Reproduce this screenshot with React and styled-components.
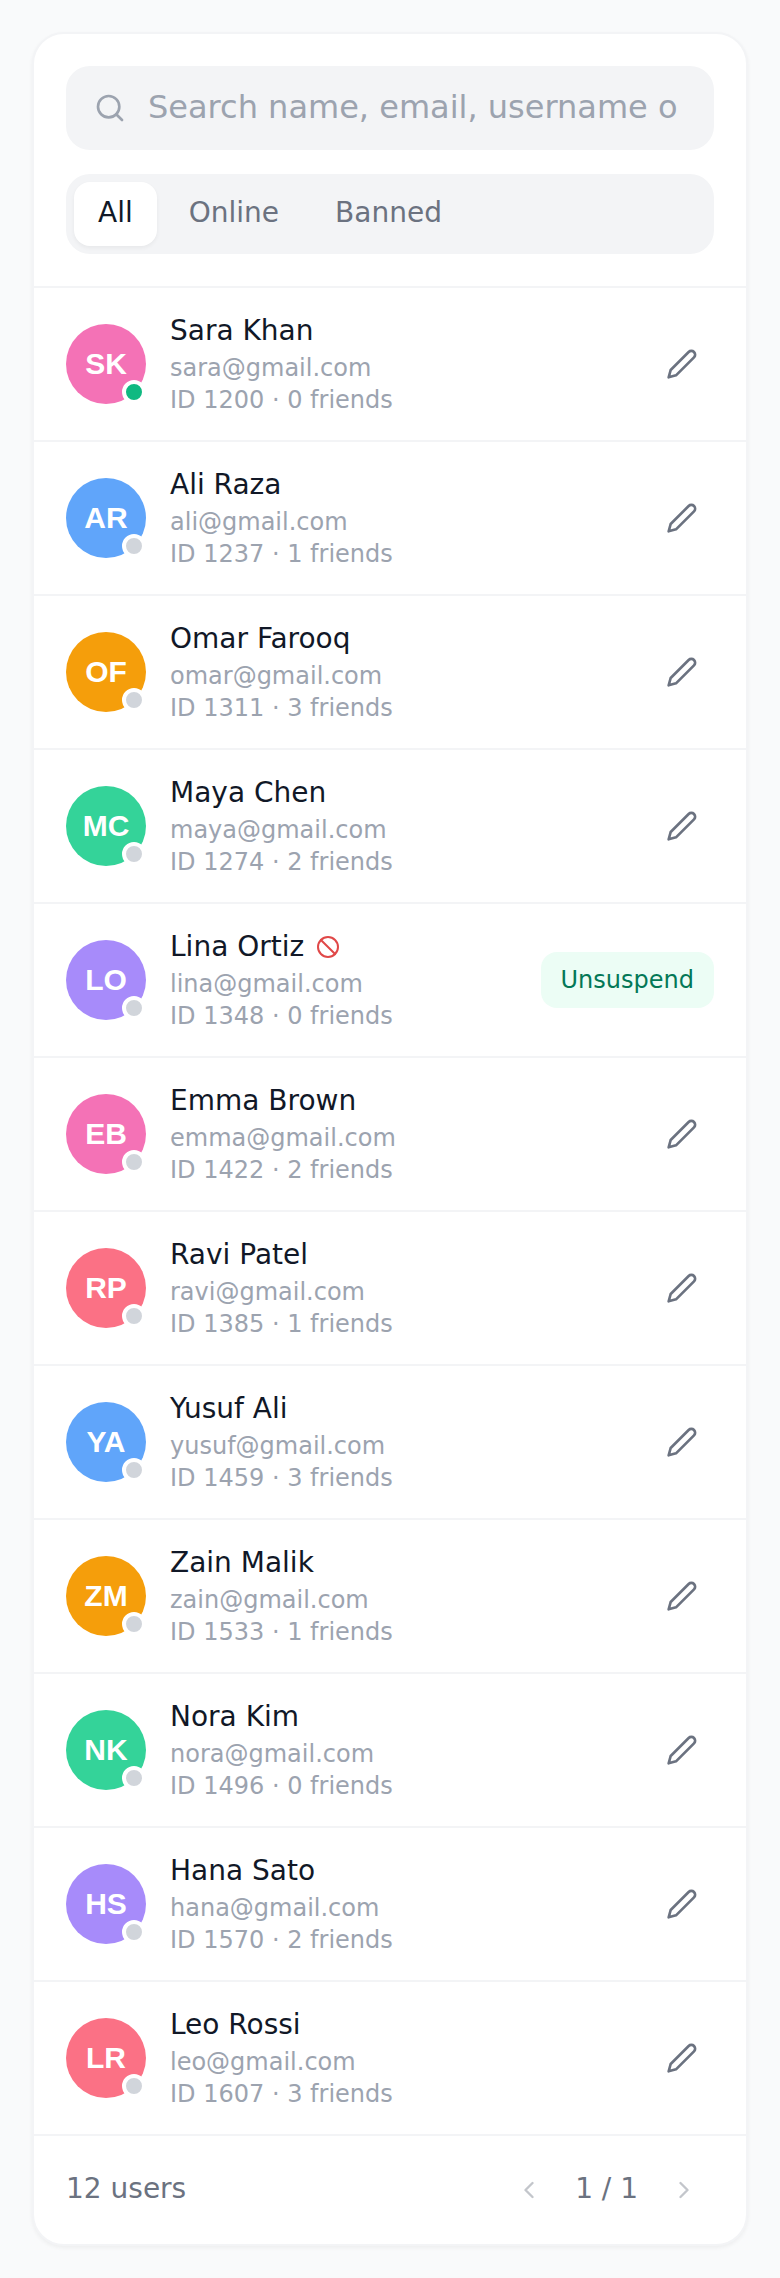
import { useState } from "react";
import styled, { createGlobalStyle } from "styled-components";
import { Search, Ban, ChevronLeft, ChevronRight } from "lucide-react";
import { FiEdit2 } from "react-icons/fi";

const users = [
  { id: 1200, name: "Sara Khan", email: "sara@gmail.com", friends: 0, color: "#f472b6", online: true },
  { id: 1237, name: "Ali Raza", email: "ali@gmail.com", friends: 1, color: "#60a5fa" },
  { id: 1311, name: "Omar Farooq", email: "omar@gmail.com", friends: 3, color: "#f59e0b" },
  { id: 1274, name: "Maya Chen", email: "maya@gmail.com", friends: 2, color: "#34d399" },
  { id: 1348, name: "Lina Ortiz", email: "lina@gmail.com", friends: 0, color: "#a78bfa", banned: true },
  { id: 1422, name: "Emma Brown", email: "emma@gmail.com", friends: 2, color: "#f472b6" },
  { id: 1385, name: "Ravi Patel", email: "ravi@gmail.com", friends: 1, color: "#fb7185" },
  { id: 1459, name: "Yusuf Ali", email: "yusuf@gmail.com", friends: 3, color: "#60a5fa" },
  { id: 1533, name: "Zain Malik", email: "zain@gmail.com", friends: 1, color: "#f59e0b" },
  { id: 1496, name: "Nora Kim", email: "nora@gmail.com", friends: 0, color: "#34d399" },
  { id: 1570, name: "Hana Sato", email: "hana@gmail.com", friends: 2, color: "#a78bfa" },
  { id: 1607, name: "Leo Rossi", email: "leo@gmail.com", friends: 3, color: "#fb7185" },
];

const tabs = ["All", "Online", "Banned"];

function initials(name) {
  return name.split(" ").map((n) => n[0]).join("");
}

function UserRow({ user, onUnsuspend }) {
  return (
    <Row>
      <Avatar $color={user.color}>
        {initials(user.name)}
        <Status $online={user.online} />
      </Avatar>
      <Info>
        <Name>
          {user.name}
          {user.banned ? <Ban size={24} color="#e04848" aria-label="Banned" /> : null}
        </Name>
        <Detail>{user.email}</Detail>
        <Detail>ID {user.id} · {user.friends} friends</Detail>
      </Info>
      {user.banned ? (
        <Unsuspend type="button" onClick={() => onUnsuspend(user.id)}>Unsuspend</Unsuspend>
      ) : (
        <IconButton type="button" aria-label={`Edit ${user.name}`}>
          <FiEdit2 size={32} />
        </IconButton>
      )}
    </Row>
  );
}

export default function App() {
  const [tab, setTab] = useState("All");
  const [query, setQuery] = useState("");
  const [unbanned, setUnbanned] = useState([]);

  const list = users.map((u) => ({ ...u, banned: u.banned && !unbanned.includes(u.id) }));
  const shown = list.filter((u) => {
    if (tab === "Online" && !u.online) return false;
    if (tab === "Banned" && !u.banned) return false;
    return `${u.name} ${u.email} ${u.id}`.toLowerCase().includes(query.toLowerCase());
  });

  return (
    <Page>
      <GlobalStyle />
      <Card>
        <Header>
          <SearchBox>
            <Search size={32} aria-hidden="true" />
            <SearchInput
              type="text"
              aria-label="Search users"
              placeholder="Search name, email, username or ID"
              value={query}
              onChange={(e) => setQuery(e.target.value)}
            />
          </SearchBox>
          <Tabs>
            {tabs.map((t) => (
              <Tab key={t} type="button" $active={t === tab} onClick={() => setTab(t)}>{t}</Tab>
            ))}
          </Tabs>
        </Header>
        <List>
          {shown.map((u) => (
            <UserRow key={u.id} user={u} onUnsuspend={(id) => setUnbanned([...unbanned, id])} />
          ))}
        </List>
        <Footer>
          <FooterText>{shown.length} users</FooterText>
          <Pager>
            <PageButton type="button" aria-label="Previous page" disabled><ChevronLeft size={28} /></PageButton>
            <FooterText>1 / 1</FooterText>
            <PageButton type="button" aria-label="Next page" disabled><ChevronRight size={28} /></PageButton>
          </Pager>
        </Footer>
      </Card>
    </Page>
  );
}

const GlobalStyle = createGlobalStyle`
  * {
    box-sizing: border-box;
  }
  body {
    margin: 0;
    background: #f9fafb;
    color: #111827;
    font-family: "DejaVu Sans", sans-serif;
  }
  button, input {
    font-family: inherit;
    border: none;
    margin: 0;
  }
  button {
    cursor: pointer;
  }
`;

const Page = styled.main`
  padding: 32px;
`;

const Card = styled.section`
  background: #ffffff;
  border: 2px solid #f3f4f6;
  border-radius: 32px;
  box-shadow: 0 2px 4px rgba(0, 0, 0, 0.05);
  overflow: hidden;
`;

const Header = styled.header`
  display: flex;
  flex-direction: column;
  gap: 24px;
  padding: 32px;
  border-bottom: 2px solid #f3f4f6;
`;

const SearchBox = styled.label`
  display: flex;
  align-items: center;
  gap: 22px;
  height: 84px;
  padding: 0 36px 0 28px;
  border-radius: 24px;
  background: #f3f4f6;
  color: #9ca3af;
  svg {
    flex-shrink: 0;
  }
`;

const SearchInput = styled.input`
  flex: 1;
  min-width: 0;
  padding: 0 0 2px;
  background: transparent;
  color: #111827;
  font-size: 32px;
  outline: none;
  &::placeholder {
    color: #9ca3af;
    opacity: 1;
  }
`;

const Tabs = styled.div`
  display: flex;
  gap: 8px;
  padding: 8px;
  border-radius: 24px;
  background: #f3f4f6;
`;

const Tab = styled.button`
  padding: 12px 24px 14px;
  border-radius: 16px;
  font-size: 28px;
  line-height: 38px;
  color: ${(p) => (p.$active ? "#111827" : "#6b7280")};
  background: ${(p) => (p.$active ? "#ffffff" : "transparent")};
  box-shadow: ${(p) => (p.$active ? "0 2px 4px rgba(0, 0, 0, 0.05)" : "none")};
`;

const List = styled.ul`
  margin: 0;
  padding: 0;
  list-style: none;
`;

const Row = styled.li`
  display: flex;
  align-items: center;
  gap: 24px;
  padding: 24px 32px;
  border-bottom: 2px solid #f3f4f6;
`;

const Avatar = styled.div`
  position: relative;
  display: flex;
  align-items: center;
  justify-content: center;
  flex-shrink: 0;
  width: 80px;
  height: 80px;
  border-radius: 50%;
  background: ${(p) => p.$color};
  color: #ffffff;
  font-family: "Liberation Sans", sans-serif;
  font-size: 30px;
  font-weight: 700;
`;

const Status = styled.span`
  position: absolute;
  right: 0;
  bottom: 0;
  width: 24px;
  height: 24px;
  border: 4px solid #ffffff;
  border-radius: 50%;
  background: ${(p) => (p.$online ? "#10b981" : "#d1d5db")};
`;

const Info = styled.div`
  flex: 1;
  min-width: 0;
`;

const Name = styled.div`
  display: flex;
  align-items: center;
  gap: 12px;
  padding-bottom: 2px;
  font-size: 28px;
  line-height: 38px;
`;

const Detail = styled.div`
  color: #9ca3af;
  font-size: 24px;
  line-height: 32px;
`;

const IconButton = styled.button`
  display: flex;
  padding: 16px;
  border-radius: 16px;
  background: transparent;
  color: #6b7280;
`;

const Unsuspend = styled.button`
  padding: 12px 20px;
  border-radius: 16px;
  background: #ecfdf5;
  color: #047857;
  font-size: 24px;
  line-height: 32px;
`;

const Footer = styled.footer`
  display: flex;
  align-items: center;
  justify-content: space-between;
  padding: 24px 32px;
  color: #6b7280;
`;

const FooterText = styled.span`
  padding-bottom: 2px;
  font-size: 28px;
  line-height: 38px;
`;

const Pager = styled.div`
  display: flex;
  align-items: center;
  gap: 16px;
`;

const PageButton = styled.button`
  display: flex;
  padding: 16px;
  background: transparent;
  color: #6b7280;
  &:disabled {
    opacity: 0.4;
    cursor: default;
  }
`;
